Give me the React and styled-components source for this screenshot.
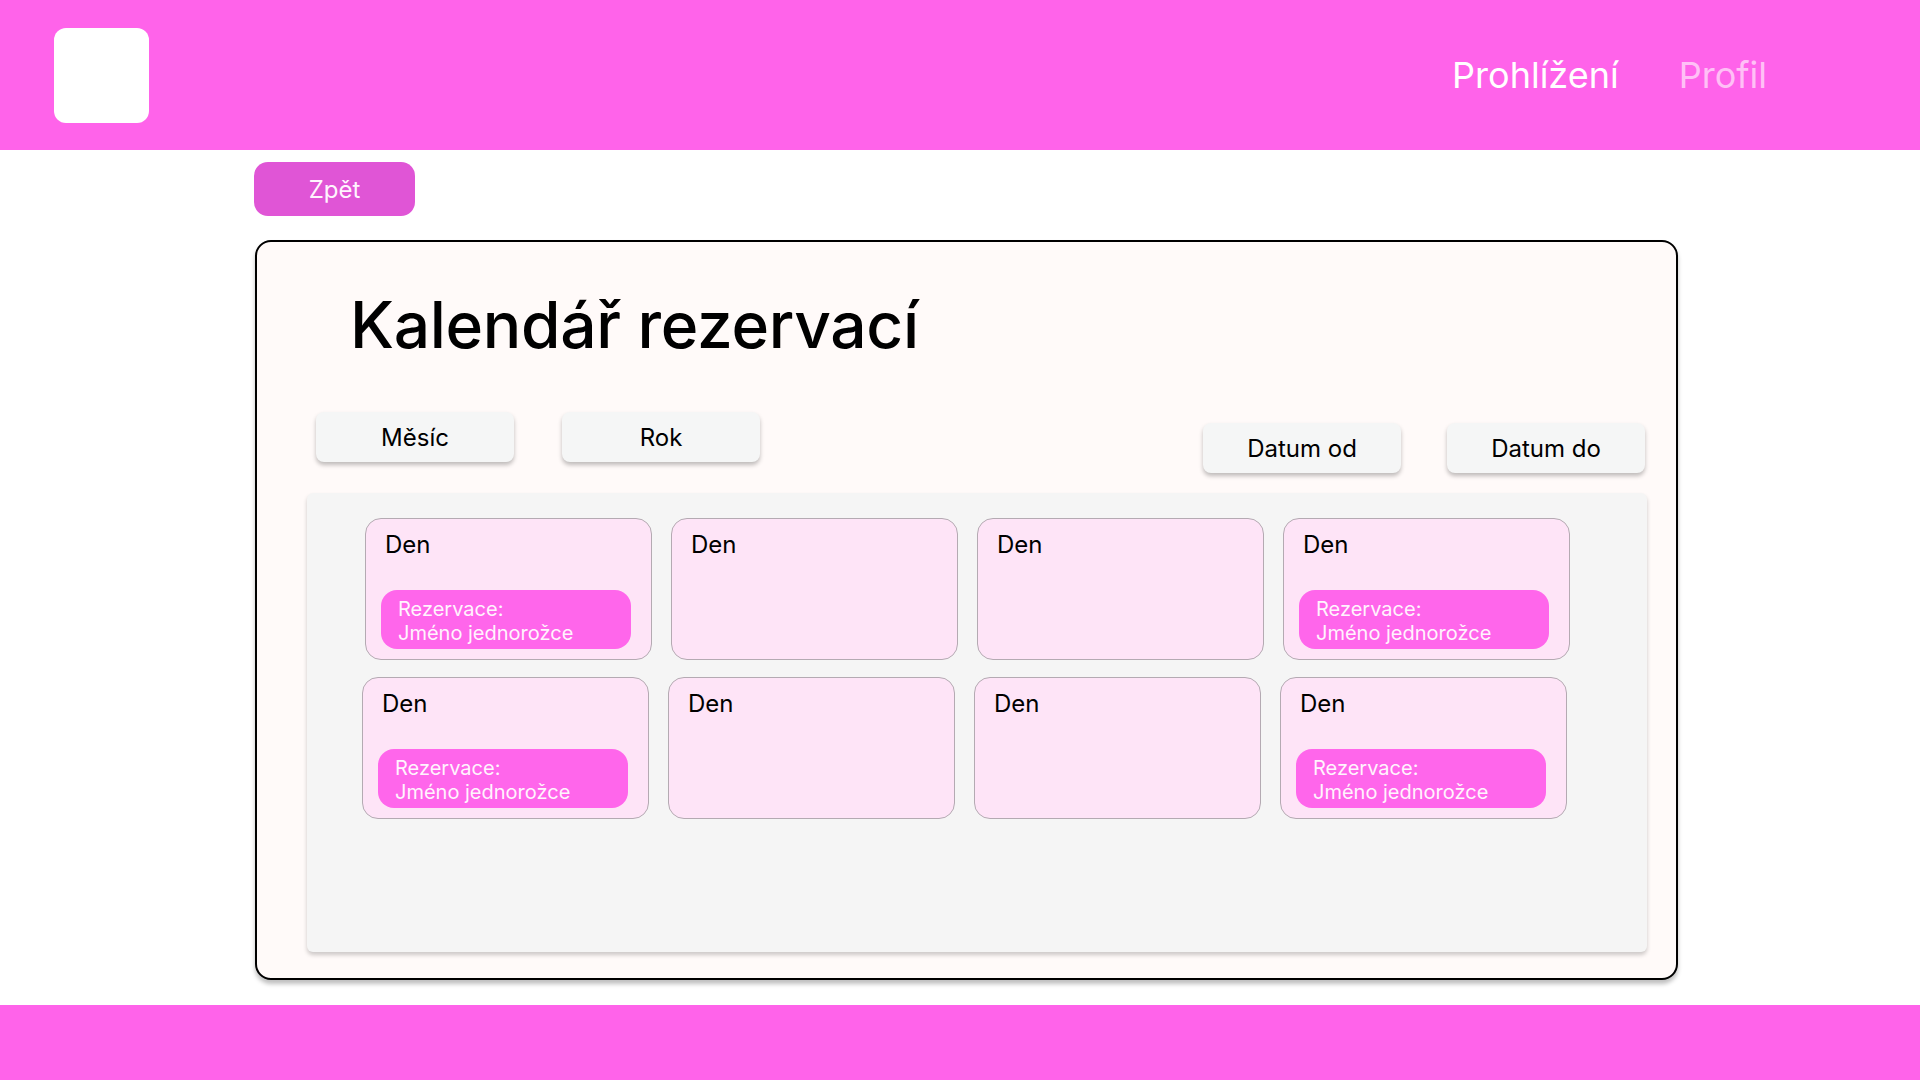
import React from "react";
import styled, { createGlobalStyle } from "styled-components";

const GlobalStyle = createGlobalStyle`
  * { box-sizing: border-box; }
  html, body { margin: 0; padding: 0; background: #ffffff; }
  body { font-family: Inter, "Noto Sans", "Liberation Sans", sans-serif; }
`;

const Page = styled.div`
  min-height: 100vh;
  display: flex;
  flex-direction: column;
`;

const Header = styled.header`
  height: 150px;
  background: #ff63ea;
  display: flex;
  align-items: center;
  justify-content: space-between;
  padding: 0 153px 0 54px;
`;

const Logo = styled.div`
  width: 95px;
  height: 95px;
  border-radius: 12px;
  background: #ffffff;
`;

const Nav = styled.nav`
  display: flex;
  align-items: center;
  gap: 60px;
`;

const NavLink = styled.a`
  font-size: 36px;
  font-weight: 400;
  color: ${(p) => (p.$active ? "#ffffff" : "#ffc0f6")};
  text-decoration: none;
  line-height: 1;
`;

const Main = styled.main`
  flex: 1;
  padding: 12px 0 25px 254px;
`;

const BackButton = styled.button`
  width: 161px;
  height: 54px;
  border: none;
  border-radius: 14px;
  background: #e055d6;
  color: #fff4fd;
  font-family: inherit;
  font-size: 24px;
  font-weight: 400;
  cursor: pointer;
`;

const Card = styled.section`
  margin: 24px 0 0 1px;
  width: 1423px;
  border: 2px solid #000000;
  border-radius: 16px;
  background: #fffaf9;
  box-shadow: 0 4px 4px rgba(0, 0, 0, 0.25);
  padding: 44px 29px 26px 50px;
`;

const Title = styled.h1`
  margin: 0 0 0 43px;
  font-size: 64px;
  font-weight: 500;
  line-height: 77px;
  color: #000000;
  letter-spacing: -0.3px;
`;

const FilterRow = styled.div`
  margin-top: 49px;
  display: flex;
  justify-content: space-between;
  align-items: flex-start;
`;

const FilterGroup = styled.div`
  display: flex;
  gap: ${(p) => p.$gap}px;
  margin-top: ${(p) => p.$top || 0}px;
  margin-left: ${(p) => p.$left || 0}px;
  margin-right: ${(p) => p.$right || 0}px;
`;

const FilterButton = styled.button`
  width: 198px;
  height: 50px;
  border: none;
  border-radius: 8px;
  background: #f5f6f6;
  box-shadow: 0 3px 4px rgba(0, 0, 0, 0.25);
  font-family: inherit;
  font-size: 24px;
  font-weight: 400;
  color: #000000;
  cursor: pointer;
`;

const Panel = styled.div`
  margin-top: 20px;
  height: 459px;
  background: #f5f5f5;
  border-radius: 6px;
  box-shadow: 0 3px 4px rgba(0, 0, 0, 0.2);
  padding: 25px 0 0 58px;
  display: flex;
  flex-direction: column;
  gap: 17px;
`;

const DayRow = styled.div`
  display: flex;
  gap: 19px;
  margin-left: ${(p) => p.$shift || 0}px;
`;

const DayCard = styled.div`
  width: 287px;
  height: 142px;
  border: 1px solid #b4aab2;
  border-radius: 16px;
  background: #fee4f7;
  padding: 11px 20px 10px 15px;
  display: flex;
  flex-direction: column;
  justify-content: space-between;
`;

const DayLabel = styled.div`
  padding-left: 4px;
  font-size: 24px;
  line-height: 29px;
  color: #000000;
`;

const Reservation = styled.div`
  height: 59px;
  border-radius: 16px;
  background: #ff66eb;
  padding: 7px 16px 0 17px;
  color: #fff4fd;
  font-size: 20px;
  line-height: 24px;
`;

const Footer = styled.footer`
  height: 75px;
  background: #ff63ea;
`;

const rows = [
  [true, false, false, true],
  [true, false, false, true],
];

export default function App() {
  return (
    <Page>
      <GlobalStyle />
      <Header>
        <Logo />
        <Nav>
          <NavLink $active href="#">Prohlížení</NavLink>
          <NavLink href="#">Profil</NavLink>
        </Nav>
      </Header>
      <Main>
        <BackButton>Zpět</BackButton>
        <Card>
          <Title>Kalendář rezervací</Title>
          <FilterRow>
            <FilterGroup $gap={48} $left={9}>
              <FilterButton>Měsíc</FilterButton>
              <FilterButton>Rok</FilterButton>
            </FilterGroup>
            <FilterGroup $gap={46} $top={11} $right={2}>
              <FilterButton>Datum od</FilterButton>
              <FilterButton>Datum do</FilterButton>
            </FilterGroup>
          </FilterRow>
          <Panel>
            {rows.map((row, ri) => (
              <DayRow key={ri} $shift={ri === 1 ? -3 : 0}>
                {row.map((has, ci) => (
                  <DayCard key={ci}>
                    <DayLabel>Den</DayLabel>
                    {has && (
                      <Reservation>
                        Rezervace:
                        <br />
                        Jméno jednorožce
                      </Reservation>
                    )}
                  </DayCard>
                ))}
              </DayRow>
            ))}
          </Panel>
        </Card>
      </Main>
      <Footer />
    </Page>
  );
}
